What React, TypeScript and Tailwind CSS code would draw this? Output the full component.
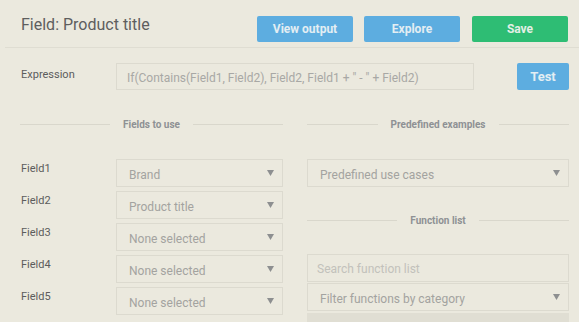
import React from "react"

const font = { fontFamily: "Roboto, 'Liberation Sans', sans-serif" }

const Arrow = () => (
	<svg width="7" height="6" viewBox="0 0 7 6" className="shrink-0">
		<path d="M0 0 H7 L3.5 6 Z" fill="#8d8f90" />
	</svg>
)

const Select: React.FC<{ label: string; className?: string }> = ({ label, className }) => (
	<div
		className={`flex h-[28px] items-center justify-between border border-[#dcdacf] pl-[12px] pr-[8px] text-[12px] text-[#a3a3a0] ${className ?? ""}`}>
		<span className="pt-[4px]">{label}</span>
		<Arrow />
	</div>
)

const SectionTitle: React.FC<{ title: string }> = ({ title }) => (
	<div className="flex h-[12px] items-center gap-[13px]">
		<div className="h-px flex-1 bg-[#d9d7cc]" />
		<span className="text-[10px] font-bold text-[#8e9194]">{title}</span>
		<div className="h-px flex-1 bg-[#d9d7cc]" />
	</div>
)

const fields = [
	{ name: "Field1", value: "Brand" },
	{ name: "Field2", value: "Product title" },
	{ name: "Field3", value: "None selected" },
	{ name: "Field4", value: "None selected" },
	{ name: "Field5", value: "None selected" },
]

export default function App() {
	return (
		<div className="h-[322px] w-[579px] overflow-hidden bg-[#ebe9de]" style={font}>
			{/* header */}
			<div className="ml-[5px] flex h-[48px] items-start justify-between border-b border-[#dfddd2] pr-[11px]">
				<div className="pl-[16px] pt-[15px] text-[16px] leading-[20px] text-[#5e5e5e]">Field: Product title</div>
				<div className="flex gap-[11px] pt-[16px]">
					<button className="h-[26px] w-[96px] rounded-[2px] bg-[#5dade0] text-[12px] font-bold text-[#e3eef3]">
						View output
					</button>
					<button className="h-[26px] w-[96px] rounded-[2px] bg-[#5dade0] text-[12px] font-bold text-[#e3eef3]">
						Explore
					</button>
					<button className="ml-px h-[26px] w-[96px] rounded-[2px] bg-[#2ebd74] text-[12px] font-bold text-[#e3efe6]">
						Save
					</button>
				</div>
			</div>

			<div className="pl-[20px] pr-[10px]">
				{/* expression */}
				<div className="mt-[15px] flex items-start">
					<div className="w-[96px] pl-px pt-[4px] text-[11px] text-[#5c5c5c]">Expression</div>
					<div className="flex h-[27px] w-[358px] items-center border border-[#dcdacf] pl-[10px] pt-[2px] text-[12px] text-[#a8a8a5]">
						If(Contains(Field1, Field2), Field2, Field1 + " - " + Field2)
					</div>
					<button className="ml-auto h-[27px] w-[52px] rounded-[2px] bg-[#5dade0] text-[13px] font-bold text-[#e3eef3]">
						Test
					</button>
				</div>

				<div className="mt-[28px] grid grid-cols-[263px_262px] gap-x-[24px]">
					{/* left column */}
					<div>
						<SectionTitle title="Fields to use" />
						<div className="mt-[29px] flex flex-col gap-[4px]">
							{fields.map((f) => (
								<div key={f.name} className="flex items-start">
									<div className="w-[96px] pl-px pt-[2px] text-[11px] text-[#5c5c5c]">{f.name}</div>
									<Select label={f.value} className="flex-1" />
								</div>
							))}
						</div>
					</div>

					{/* right column */}
					<div>
						<SectionTitle title="Predefined examples" />
						<Select label="Predefined use cases" className="mt-[29px]" />
						<div className="mt-[27px]">
							<SectionTitle title="Function list" />
						</div>
						<div className="mt-[28px] flex h-[28px] items-center border border-[#dcdacf] pl-[9px] pt-[2px] text-[12px] text-[#c2c1bb]">
							Search function list
						</div>
						<Select label="Filter functions by category" className="mt-px" />
						<div className="mt-[2px] h-[20px] bg-[#e0ded3]" />
					</div>
				</div>
			</div>
		</div>
	)
}
